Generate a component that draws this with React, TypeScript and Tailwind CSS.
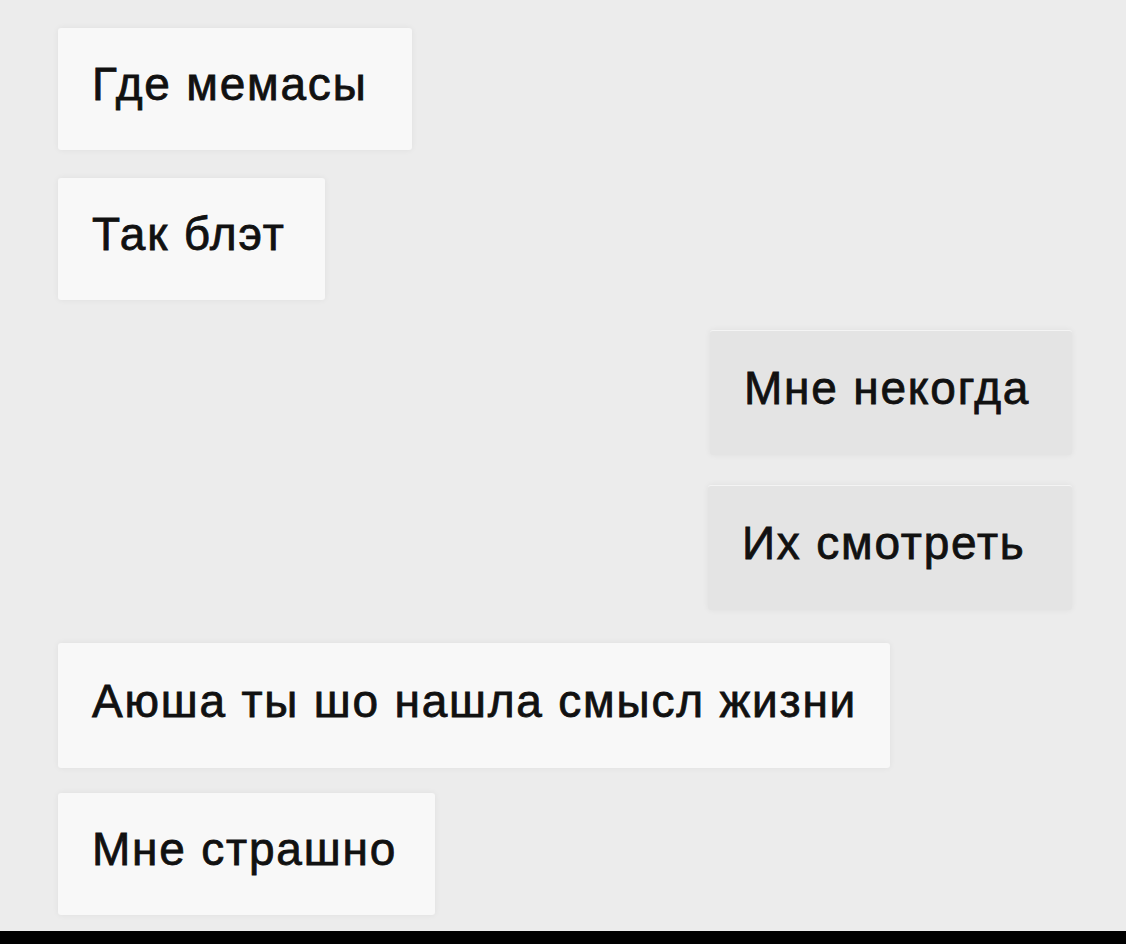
const messages = [
  { text: "Где мемасы", mine: false, top: "mt-[28px]", width: "w-[354px]", h: "h-[122px]" },
  { text: "Так блэт", mine: false, top: "mt-[28px]", width: "w-[267px]", h: "h-[122px]" },
  { text: "Мне некогда", mine: true, top: "mt-[30px]", width: "w-[362px]", h: "h-[125px]" },
  { text: "Их смотреть", mine: true, top: "mt-[30px]", width: "w-[364px]", h: "h-[125px]" },
  { text: "Аюша ты шо нашла смысл жизни", mine: false, top: "mt-[33px]", width: "w-[832px]", h: "h-[125px]" },
  { text: "Мне страшно", mine: false, top: "mt-[25px]", width: "w-[377px]", h: "h-[122px]" },
];

function Bubble({ m }: { m: (typeof messages)[number] }) {
  return (
    <div
      className={`${m.top} ${m.width} ${m.h} flex items-center pl-[34px] rounded-[3px] shadow-[0_0_6px_rgba(0,0,0,0.06)] ${
        m.mine ? "self-end bg-[#e4e4e4] border-t border-[#f4f4f4]" : "self-start bg-[#f8f8f8]"
      }`}
    >
      <span className="text-[46px] leading-none text-[#111] tracking-[1.8px] pb-[10px] [-webkit-text-stroke:0.8px_#111]">
        {m.text}
      </span>
    </div>
  );
}

export default function App() {
  return (
    <div
      className="w-[1126px] h-[944px] bg-[#ececec] flex flex-col overflow-hidden"
      style={{ fontFamily: '"Liberation Sans", Arial, sans-serif' }}
    >
      <div className="flex-1 flex flex-col pl-[58px] pr-[54px]">
        {messages.map((m) => (
          <Bubble key={m.text} m={m} />
        ))}
      </div>
      <div className="h-[13px] bg-black" />
    </div>
  );
}
